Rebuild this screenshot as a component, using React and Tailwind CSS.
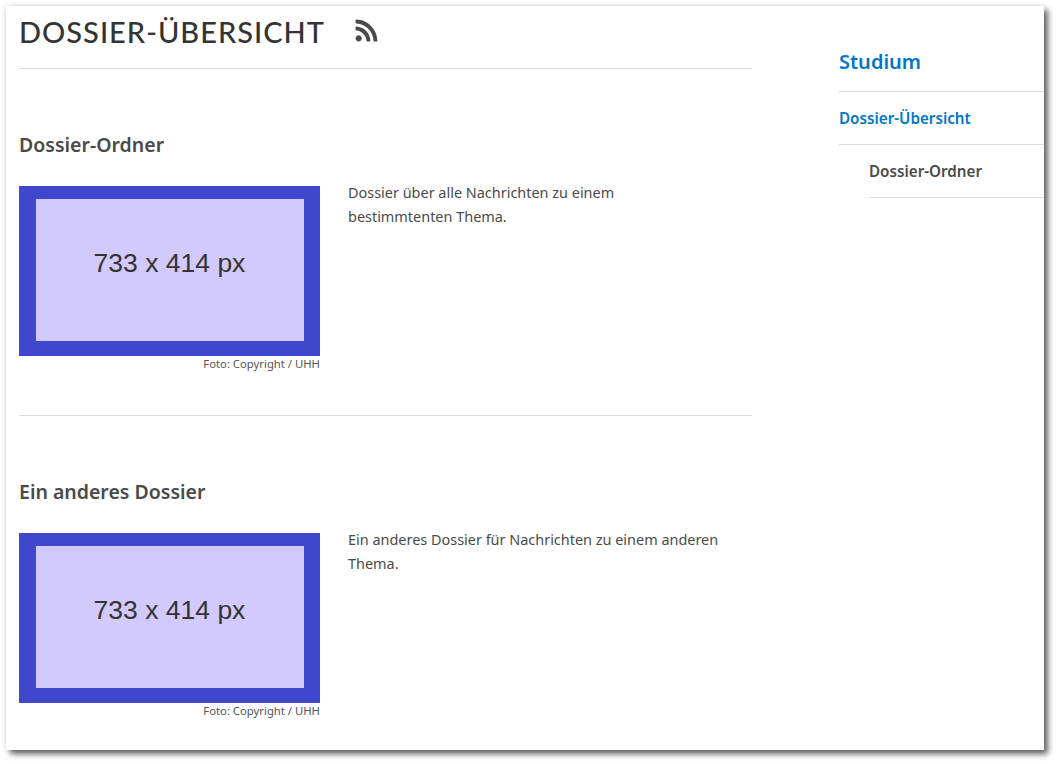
import React from 'react';
import { FaRss } from 'react-icons/fa';

const dossiers = [
  {
    title: 'Dossier-Ordner',
    text: ['Dossier über alle Nachrichten zu einem', 'bestimmtenten Thema.'],
  },
  {
    title: 'Ein anderes Dossier',
    text: ['Ein anderes Dossier für Nachrichten zu einem anderen', 'Thema.'],
  },
];

const Placeholder = () => (
  <div className="w-[301px]">
    <div className="h-[170px] bg-[#3f48cc] pl-[17px] pr-[16px] pt-[13px] pb-[15px]">
      <div className="h-full bg-[#d2c9ff] pb-[12px] pr-[1px] flex items-center justify-center font-['Liberation_Sans',sans-serif] text-[26.5px] text-[#333]">
        733 x 414 px
      </div>
    </div>
    <div className="text-right text-[11.3px] leading-[16px] text-[#555]">Foto: Copyright / UHH</div>
  </div>
);

const App = () => {
  return (
    <div className="h-[764px] w-[1058px] overflow-hidden bg-white pl-[6px] pt-[6px] font-['Noto_Sans',sans-serif]">
      <div className="flex h-[744px] w-[1038px] bg-white shadow-[4px_4px_6px_rgba(0,0,0,0.6),0_0_6px_rgba(0,0,0,0.12)]">
        {/* Main column */}
        <div className="ml-[13px] w-[733px]">
          <div className="flex h-[63px] items-start border-b border-[#ddd] pt-[6px]">
            <h1 className="font-['Lato',sans-serif] text-[29px] leading-[40px] font-medium uppercase tracking-[1px] text-[#333]">
              Dossier-Übersicht
            </h1>
            <FaRss className="ml-[29px] mt-[6px] h-[25px] w-[25px] text-[#4a4a4a]" />
          </div>

          {dossiers.map((d, i) => (
            <div key={d.title} className={i === 0 ? 'h-[347px] border-b border-[#ddd] pt-[62px]' : 'pt-[62px]'}>
              <h2 className="text-[19.5px] leading-[28px] font-semibold text-[#4a4a4a]">{d.title}</h2>
              <div className="mt-[27px] flex">
                <Placeholder />
                <div className="ml-[28px] -mt-[5px] text-[14.45px] leading-[24px] text-[#4a4a4a]">
                  {d.text.map((line) => (
                    <div key={line}>{line}</div>
                  ))}
                </div>
              </div>
            </div>
          ))}
        </div>

        {/* Sidebar */}
        <div className="ml-[87px] flex-1 font-semibold">
          <div className="flex h-[86px] items-end border-b border-[#ddd] pb-[13px] text-[20px] leading-[32px] text-[#0077c8]">
            Studium
          </div>
          <div className="flex h-[53px] items-center border-b border-[#ddd] text-[15.2px] text-[#0077c8]">
            Dossier-Übersicht
          </div>
          <div className="ml-[30px] flex h-[53px] items-center border-b border-[#ddd] text-[15.2px] text-[#4a4a4a]">
            Dossier-Ordner
          </div>
        </div>
      </div>
    </div>
  );
};

export default App;
